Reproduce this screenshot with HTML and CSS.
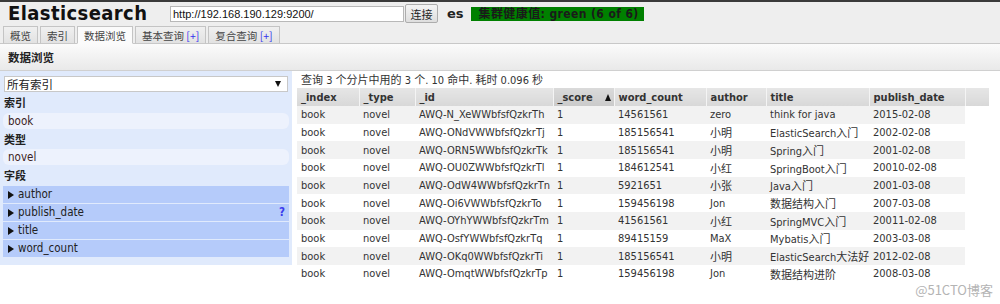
FILE: index.html
```html
<!DOCTYPE html>
<html lang="zh">
<head>
<meta charset="utf-8">
<title>Elasticsearch</title>
<link rel="stylesheet" href="styles.css">
</head>
<body>
<div class="top">
  <div class="header">
    <h1 class="logo">Elasticsearch</h1>
    <input class="url" type="text" value="http://192.168.190.129:9200/">
    <button class="connect">连接</button>
    <span class="cluster">es</span>
    <span class="health">集群健康值: green (6 of 6)</span>
  </div>
  <div class="tabs">
    <span class="tab">概览</span>
    <span class="tab">索引</span>
    <span class="tab active">数据浏览</span>
    <span class="tab">基本查询 <span class="plus">[+]</span></span>
    <span class="tab">复合查询 <span class="plus">[+]</span></span>
  </div>
</div>
<div class="section-title">数据浏览</div>
<div class="main">
  <aside class="filter">
    <div class="select"><span>所有索引</span><span class="arrow"></span></div>
    <div class="label">索引</div>
    <div class="item">book</div>
    <div class="label">类型</div>
    <div class="item">novel</div>
    <div class="label">字段</div>
    <div class="field"><span class="tri"></span>author</div>
    <div class="field"><span class="tri"></span>publish_date<span class="help">?</span></div>
    <div class="field"><span class="tri"></span>title</div>
    <div class="field"><span class="tri"></span>word_count</div>
  </aside>
  <section class="results">
    <div class="summary">查询 3 个分片中用的 3 个. 10 命中. 耗时 0.096 秒</div>
    <table class="grid">
      <colgroup>
        <col class="c1"><col class="c2"><col class="c3"><col class="c4"><col class="c5"><col class="c6"><col class="c7"><col class="c8"><col class="c9">
      </colgroup>
      <thead>
        <tr><th>_index</th><th>_type</th><th>_id</th><th class="sorted">_score <span class="up"></span></th><th>word_count</th><th>author</th><th>title</th><th>publish_date</th><th></th></tr>
      </thead>
      <tbody>
        <tr><td>book</td><td>novel</td><td>AWQ-N_XeWWbfsfQzkrTh</td><td>1</td><td>14561561</td><td>zero</td><td>think for java</td><td>2015-02-08</td></tr>
        <tr><td>book</td><td>novel</td><td>AWQ-ONdVWWbfsfQzkrTj</td><td>1</td><td>185156541</td><td>小明</td><td>ElasticSearch入门</td><td>2002-02-08</td></tr>
        <tr><td>book</td><td>novel</td><td>AWQ-ORN5WWbfsfQzkrTk</td><td>1</td><td>185156541</td><td>小明</td><td>Spring入门</td><td>2001-02-08</td></tr>
        <tr><td>book</td><td>novel</td><td>AWQ-OU0ZWWbfsfQzkrTl</td><td>1</td><td>184612541</td><td>小红</td><td>SpringBoot入门</td><td>20010-02-08</td></tr>
        <tr><td>book</td><td>novel</td><td>AWQ-OdW4WWbfsfQzkrTn</td><td>1</td><td>5921651</td><td>小张</td><td>Java入门</td><td>2001-03-08</td></tr>
        <tr><td>book</td><td>novel</td><td>AWQ-Oi6VWWbfsfQzkrTo</td><td>1</td><td>159456198</td><td>Jon</td><td>数据结构入门</td><td>2007-03-08</td></tr>
        <tr><td>book</td><td>novel</td><td>AWQ-OYhYWWbfsfQzkrTm</td><td>1</td><td>41561561</td><td>小红</td><td>SpringMVC入门</td><td>20011-02-08</td></tr>
        <tr><td>book</td><td>novel</td><td>AWQ-OsfYWWbfsfQzkrTq</td><td>1</td><td>89415159</td><td>MaX</td><td>Mybatis入门</td><td>2003-03-08</td></tr>
        <tr><td>book</td><td>novel</td><td>AWQ-OKq0WWbfsfQzkrTi</td><td>1</td><td>185156541</td><td>小明</td><td>ElasticSearch大法好</td><td>2012-02-08</td></tr>
        <tr><td>book</td><td>novel</td><td>AWQ-OmqtWWbfsfQzkrTp</td><td>1</td><td>159456198</td><td>Jon</td><td>数据结构进阶</td><td>2008-03-08</td></tr>
      </tbody>
    </table>
  </section>
</div>
<div class="watermark">@51CTO博客</div>
</body>
</html>
```
FILE: styles.css
```css
* { box-sizing: border-box; }
html, body { margin: 0; padding: 0; }
body {
  width: 1000px;
  height: 304px;
  overflow: hidden;
  position: relative;
  background: #fff;
  color: #333;
  font-family: "DejaVu Sans Condensed", "DejaVu Sans", "Noto Sans CJK SC", sans-serif;
  font-size: 11px;
}

.top {
  background: #eeeeee;
  border-top: 2px solid #3a3a3a;
}
.header {
  height: 23px;
  display: flex;
  align-items: center;
  padding-left: 8px;
}
.logo {
  margin: 0;
  font-size: 20px;
  letter-spacing: 0.4px;
  font-weight: bold;
  color: #111;
  line-height: 23px;
  width: 162px;
}
.url {
  width: 234px;
  height: 16px;
  margin: 0;
  padding: 0 2px;
  border: 1px solid #b8b8b8;
  background: #fff;
  font-family: "Liberation Sans", Arial, sans-serif;
  font-size: 11px;
  color: #111;
}
.connect {
  width: 33px;
  height: 19px;
  margin: 0 0 0 1px;
  padding: 0;
  border: 1px solid #adadad;
  border-radius: 2px;
  background: linear-gradient(#f4f4f4, #dedede);
  font-family: "Noto Sans CJK SC", sans-serif;
  font-size: 11px;
  color: #222;
}
.cluster {
  margin-left: 9px;
  font-family: "DejaVu Sans", sans-serif;
  font-weight: bold;
  font-size: 13px;
  color: #222;
}
.health {
  margin-left: 7px;
  width: 173px;
  height: 14px;
  line-height: 14px;
  padding: 0 0 0 8px;
  background: #008000;
  color: #1a1a1a;
  font-weight: bold;
  font-size: 12px;
  letter-spacing: 0.4px;
  white-space: nowrap;
  overflow: hidden;
  font-family: "DejaVu Sans Condensed", "DejaVu Sans", "Noto Sans CJK SC", sans-serif;
}

.tabs {
  height: 19px;
  display: flex;
  align-items: flex-end;
  gap: 2px;
  padding-left: 3px;
  border-bottom: 1px solid #c8c8c8;
}
.tab {
  height: 18px;
  line-height: 17px;
  padding: 0 6px;
  margin-bottom: -1px;
  border: 1px solid #c4c4c4;
  border-bottom: 1px solid #c8c8c8;
  background: linear-gradient(#f0f0f0, #e2e2e2);
  font-family: "Noto Sans CJK SC", sans-serif;
  font-size: 10.5px;
  color: #444;
}
.tab.active {
  background: #fbfbfb;
  border-bottom-color: #fbfbfb;
}
.plus { color: #3333ee; }

.section-title {
  height: 27px;
  line-height: 26px;
  padding-left: 8px;
  background: linear-gradient(#fbfbfb, #e9e9e9);
  border-bottom: 1px solid #d0d0d0;
  font-family: "Noto Sans CJK SC", sans-serif;
  font-weight: bold;
  font-size: 11.5px;
  color: #222;
}

.main {
  display: flex;
  align-items: flex-start;
  gap: 5px;
}
.filter {
  width: 292px;
  flex: none;
  padding: 5px 3px 8px 3px;
  background: #e0eafc;
}
.select {
  height: 16px;
  margin: 0 1px;
  padding: 0 6px 0 2px;
  display: flex;
  justify-content: space-between;
  align-items: center;
  background: #fff;
  border: 1px solid #c8c8c8;
  font-family: "Noto Sans CJK SC", sans-serif;
  font-size: 11.5px;
  color: #222;
}
.arrow {
  width: 0;
  height: 0;
  border-left: 3px solid transparent;
  border-right: 3px solid transparent;
  border-top: 6px solid #111;
}
.label {
  height: 20px;
  line-height: 20px;
  padding-left: 1px;
  font-family: "Noto Sans CJK SC", sans-serif;
  font-weight: bold;
  font-size: 11px;
  color: #222;
}
.select + .label { height: 21px; }
.item {
  height: 16px;
  line-height: 16px;
  padding-left: 5px;
  background: #edf2fd;
  border-radius: 6px;
  color: #3a2222;
  font-size: 11.5px;
}
.field {
  height: 17px;
  line-height: 17px;
  margin-top: 1px;
  display: flex;
  align-items: center;
  padding: 0 4px 0 5px;
  background: #b5cbfa;
  color: #222;
  font-size: 11.5px;
}
.tri {
  width: 0;
  height: 0;
  margin-right: 4px;
  border-top: 4.5px solid transparent;
  border-bottom: 4.5px solid transparent;
  border-left: 6px solid #111;
}
.help {
  margin-left: auto;
  color: #3a3aee;
  font-weight: bold;
}

.results {
  padding-top: 3px;
}
.summary {
  height: 14px;
  line-height: 14px;
  padding-left: 4px;
  font-family: "DejaVu Sans Condensed", "DejaVu Sans", "Noto Sans CJK SC", sans-serif;
  color: #333;
}
.grid {
  border-collapse: collapse;
  table-layout: fixed;
  width: 692px;
}
.c1 { width: 62px; }
.c2 { width: 56px; }
.c3 { width: 138px; }
.c4 { width: 61px; }
.c5 { width: 92px; }
.c6 { width: 60px; }
.c7 { width: 103px; }
.c8 { width: 96px; }
.c9 { width: 24px; }
.grid th {
  height: 18px;
  padding: 0 4px;
  text-align: left;
  font-weight: bold;
  color: #333;
  background: linear-gradient(#e6e6e6, #d8d8d8);
  border-left: 1px solid #f4f4f4;
  white-space: nowrap;
  overflow: hidden;
}
.grid th:first-child { border-left: none; }
.grid th.sorted { background: linear-gradient(#dadada, #cacaca); }
.up {
  display: inline-block;
  margin-left: 9px;
  width: 0;
  height: 0;
  border-left: 3.5px solid transparent;
  border-right: 3.5px solid transparent;
  border-bottom: 7px solid #111;
}
.grid td {
  height: 17.67px;
  padding: 0 4px;
  white-space: nowrap;
  overflow: hidden;
  color: #333;
  background: #fff;
}
.grid tbody tr:nth-child(odd) td { background: #f2f2f2; }

.watermark {
  position: absolute;
  right: 7px;
  bottom: 5px;
  font-family: "Noto Sans CJK SC", sans-serif;
  font-size: 13px;
  color: #b4b4b4;
  text-shadow: 0 0 1px #fff;
}
```
